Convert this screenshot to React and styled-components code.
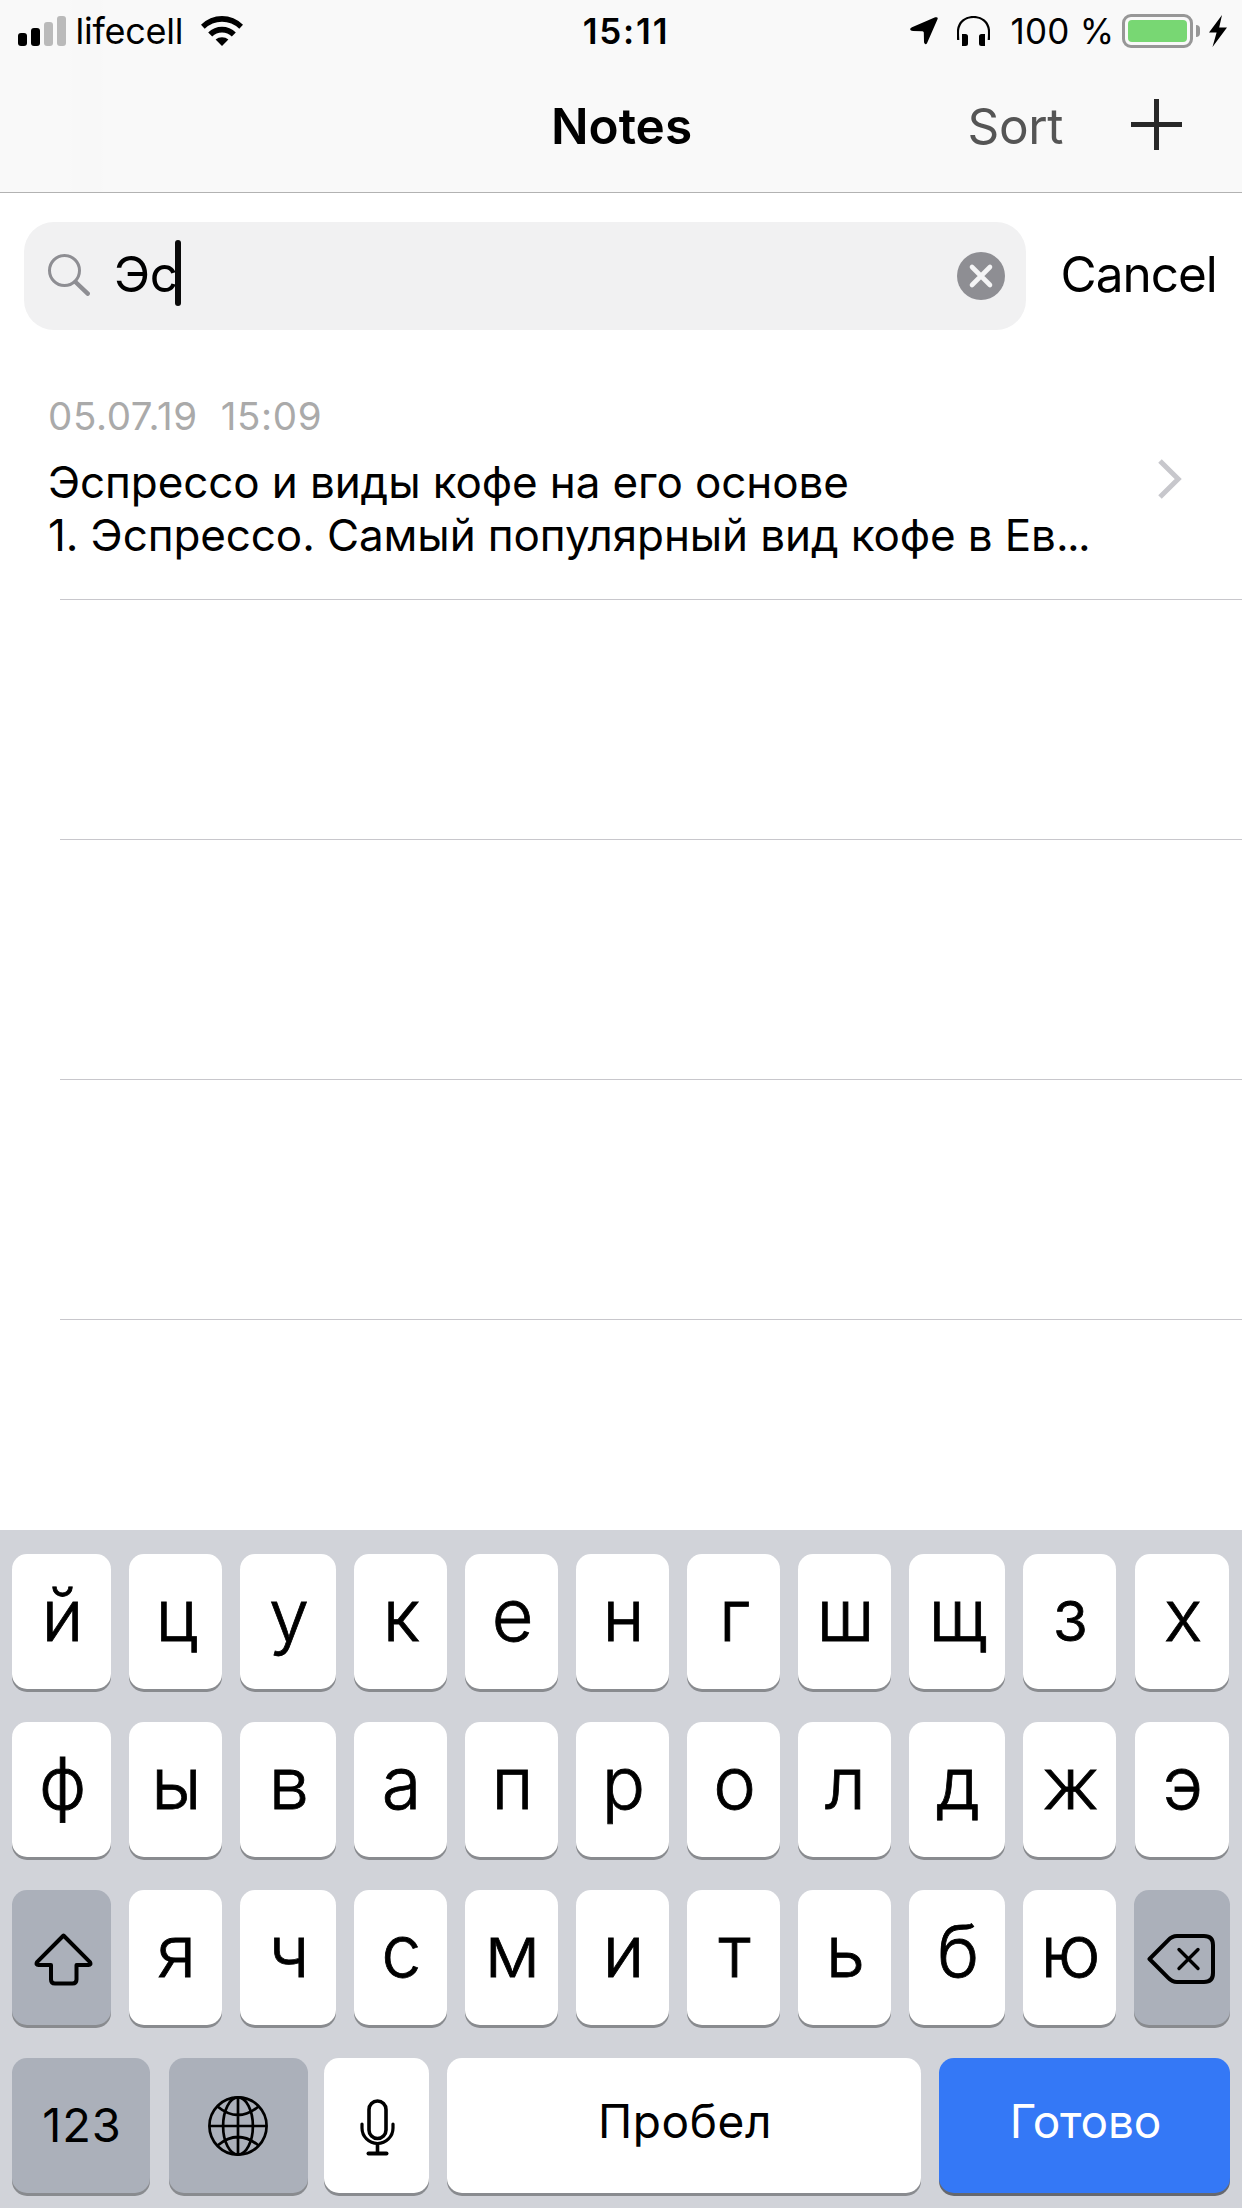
import React from 'react';
import styled, { createGlobalStyle, css } from 'styled-components';

const GlobalStyle = createGlobalStyle`
  html, body, #root { margin: 0; padding: 0; }
  body { background: #fff; }
  * { box-sizing: border-box; }
  svg { display: block; flex: none; }
`;

const Screen = styled.div`
  display: flex;
  flex-direction: column;
  width: 1242px;
  height: 2208px;
  overflow: hidden;
  background: #fff;
  color: #000;
  font-family: Inter, 'Noto Sans', sans-serif;
`;

const Header = styled.header`
  flex: none;
  height: 193px;
  border-bottom: 1px solid #b2b2b2;
  background: linear-gradient(to right, #f9f9f9 70px, #f8f8f8 72px, #f8f8f8 101px, #f9f9f9 103px);
`;

const StatusBar = styled.div`
  display: grid;
  grid-template-columns: 1fr auto 1fr;
  align-items: center;
  height: 62px;
  padding: 0 15px 0 18px;
  font-size: 35px;
  line-height: 42px;
`;

const StatusGroup = styled.div`
  display: flex;
  align-items: center;
  justify-content: ${(p) => p.$justify || 'flex-start'};
`;

const Carrier = styled.span`
  width: 135px;
  padding-left: 9.5px;
  font-size: 36px;
  letter-spacing: -0.24px;
`;

const Clock = styled.time`
  padding-left: 7px;
  font-weight: 600;
  letter-spacing: 1.8px;
`;

const HeadphonesSlot = styled.div`
  margin: 0 0 0 19px;
`;

const Percent = styled.span`
  width: 132px;
  padding-left: 20.5px;
  letter-spacing: 0.27px;
  white-space: nowrap;
`;

const Battery = styled.div`
  display: flex;
  align-items: center;
  margin-right: 9px;
`;

const BatteryShell = styled.div`
  width: 71px;
  height: 34px;
  padding: 3px;
  border: 3px solid #979797;
  border-radius: 9px;
`;

const BatteryLevel = styled.div`
  width: 100%;
  height: 100%;
  border-radius: 4px;
  background: #78d773;
`;

const BatteryNub = styled.div`
  width: 4px;
  height: 12px;
  margin-left: 3px;
  border-radius: 0 4px 4px 0;
  background: #979797;
`;

const NavBar = styled.nav`
  display: grid;
  grid-template-columns: 1fr auto 1fr;
  align-items: center;
  height: 128px;
  padding: 0 60px;
  font-size: 49.5px;
  line-height: 60px;
`;

const NavTitle = styled.h1`
  margin: 0;
  padding-left: 1px;
  grid-column: 2;
  font-size: inherit;
  font-weight: 600;
`;

const NavActions = styled.div`
  display: flex;
  align-items: center;
  justify-content: flex-end;
`;

const PlainButton = styled.button`
  margin: 0;
  padding: 0;
  border: 0;
  background: none;
  color: inherit;
  font: inherit;
`;

const SortButton = styled(PlainButton)`
  margin-right: 68px;
  color: #555;
  letter-spacing: -0.4px;
`;

const AddButton = styled(PlainButton)`
  padding-bottom: 3px;
`;

const SearchBar = styled.div`
  display: flex;
  flex: none;
  align-items: center;
  height: 166px;
  padding: 0 24px;
`;

const SearchField = styled.div`
  display: flex;
  align-items: center;
  width: 1002px;
  height: 108px;
  padding: 0 21px 0 24px;
  border-radius: 30px;
  background: #f1f1f2;
`;

const SearchIcon = styled.div`
  padding-bottom: 2px;
`;

const Query = styled.span`
  padding: 0 0 4px 24px;
  font-size: 49.5px;
  line-height: 60px;
  letter-spacing: -0.4px;
`;

const Caret = styled.span`
  width: 6px;
  height: 66px;
  margin: 0 auto 6px -3px;
  border-radius: 3px;
  background: #0a0a0a;
`;

const CancelButton = styled(PlainButton)`
  margin-left: 34.5px;
  padding-bottom: 4px;
  font-size: 49.5px;
  line-height: 60px;
  letter-spacing: -1px;
`;

const NoteList = styled.ul`
  flex: 1;
  margin: 0;
  padding: 1px 0 0 60px;
  overflow: hidden;
  list-style: none;
`;

const NoteRow = styled.li`
  display: flex;
  height: 240px;
  border-bottom: 1px solid #c8c7cc;
`;

const NoteBody = styled.div`
  flex: none;
  width: 1100px;
  margin-left: -12px;
  padding-top: 32px;
`;

const NoteDate = styled.div`
  font-size: 38.5px;
  line-height: 48px;
  letter-spacing: 0.64px;
  color: #aaa;
  white-space: pre;
`;

const NoteLine = styled.div`
  margin-top: ${(p) => p.$gap || 0}px;
  font-size: 44px;
  line-height: 53px;
  letter-spacing: -0.11px;
  white-space: nowrap;
`;

const Dots = styled.span`
  letter-spacing: -1.6px;
`;

const Disclosure = styled.div`
  display: flex;
  align-items: center;
  height: 238px;
  margin-left: 10px;
`;

const KeyboardPanel = styled.section`
  display: flex;
  flex: none;
  flex-direction: column;
  gap: 33px;
  height: 678px;
  padding: 24px 12px 0;
  background: #d1d3d9;
`;

const KeyRow = styled.div`
  display: grid;
  grid-template-columns: ${(p) => p.$columns};
  height: 135px;
`;

const tones = {
  light: css`
    background: #fff;
    color: #000;
    box-shadow: 0 3px 0 #898b8f;
  `,
  dark: css`
    background: #abb0ba;
    color: #000;
    box-shadow: 0 3px 0 #898b8f;
  `,
  primary: css`
    background: #3478f6;
    color: #fff;
    box-shadow: 0 3px 0 #66686e;
  `,
};

const Key = styled(PlainButton)`
  display: flex;
  align-items: center;
  justify-content: center;
  min-width: 0;
  height: 135px;
  border-radius: 15px;
  ${(p) => tones[p.$tone || 'light']}
`;

const IconKey = styled(Key)`
  padding: ${(p) => p.$inset || '0'};
`;

const LetterKey = styled(Key)`
  padding: 0 0 13px 2px;
  font-size: 72px;
  font-weight: 300;
  line-height: 88px;
  -webkit-text-stroke: 0.8px currentColor;
`;

const LabelKey = styled(Key)`
  padding: 0 0 ${(p) => p.$lift}px 2px;
  font-size: ${(p) => p.$size}px;
  line-height: 56px;
  letter-spacing: ${(p) => p.$tracking}px;
`;

const Signal = () => (
  <svg width="48" height="30" viewBox="0 0 48 30">
    <rect x="0" y="17" width="9" height="13" rx="3" />
    <rect x="13" y="12" width="9" height="18" rx="3" />
    <rect x="26" y="6" width="9" height="24" rx="3" fill="#bababa" />
    <rect x="39" y="0" width="9" height="30" rx="3" fill="#bababa" />
  </svg>
);

const Wifi = () => (
  <svg width="42" height="30" viewBox="0 0 42 30">
    <path d="M0 8.800A29.500 29.500 0 0 1 42 8.800L38.300 12.800A24.500 24.500 0 0 0 3.700 12.800Z" />
    <path d="M7.200 16.400A19.600 19.600 0 0 1 34.800 16.400L30.800 20.400A14 14 0 0 0 11.200 20.400Z" />
    <path d="M14.600 23.600A9.600 9.600 0 0 1 27.400 23.600L21 30Z" />
  </svg>
);

const LocationArrow = () => (
  <svg width="28" height="28" viewBox="0 0 28 28">
    <path d="M25.2.3Q28.6-.4 27.4 2.6L17 26.2Q15.9 28 14.6 26.6Q14 26 14 24.8L13.8 15.6Q13.7 14.4 12.5 14.3L3 13.9Q.3 13.9.1 12.3Q0 11 2 10.2Z" />
  </svg>
);

const Headphones = () => (
  <svg width="33" height="30" viewBox="0 0 33 30">
    <path d="M1.200 24C.8 18 1 15.500 1 14.500C2 5.500 8.500 1 16.500 1S31 5.500 32 14.500C32 15.500 32.200 18 31.800 24" fill="none" stroke="#000" strokeWidth="2.200" />
    <path d="M5 18H8.500Q11 18 11 20.500V27.500Q11 30 8.500 30H5ZM28 18H24.500Q22 18 22 20.500V27.500Q22 30 24.500 30H28Z" />
  </svg>
);

const Bolt = () => (
  <svg width="18" height="32" viewBox="0 0 18 32">
    <path d="M13 0L0 17.500H7.600L3.500 32L18 12.500H10.200Z" />
  </svg>
);

const Plus = () => (
  <svg width="51" height="51" viewBox="0 0 51 51">
    <path d="M25.500 0V51M0 25.500H51" stroke="#282828" strokeWidth="5" />
  </svg>
);

const Magnifier = () => (
  <svg width="42" height="42" viewBox="0 0 42 42" fill="none" stroke="#8e8e93">
    <circle cx="16.500" cy="16.500" r="15" strokeWidth="3" />
    <path d="M27.500 28L39.700 39.700" strokeWidth="4.400" strokeLinecap="round" />
  </svg>
);

const ClearIcon = () => (
  <svg width="48" height="48" viewBox="0 0 48 48">
    <circle cx="24" cy="24" r="24" fill="#8e8e93" />
    <path d="M15 15L33 33M33 15L15 33" stroke="#f4f4f5" strokeWidth="4.600" strokeLinecap="round" />
  </svg>
);

const Chevron = () => (
  <svg width="24" height="40" viewBox="0 0 24 40">
    <path d="M2 2L20.200 20L2 38" fill="none" stroke="#c7c7cc" strokeWidth="5" />
  </svg>
);

const ShiftIcon = () => (
  <svg width="59" height="53" viewBox="0 0 59 53" fill="none" stroke="#000" strokeWidth="4" strokeLinejoin="round">
    <path d="M29.500 2.500L56 29.200Q57.400 32 54.500 32H42.500V46.500Q42.500 50.500 38.500 50.500H21Q17 50.500 17 46.500V32H4.500Q1.600 32 3 29.200Z" />
  </svg>
);

const DeleteIcon = () => (
  <svg width="68" height="50" viewBox="0 0 68 50" fill="none" stroke="#000" strokeWidth="4" strokeLinejoin="round" strokeLinecap="round">
    <path d="M2.500 25L21 6.300Q25 2 30 2H57Q66 2 66 11V39Q66 48 57 48H30Q25 48 21 43.700Z" />
    <path d="M32 15.500L51 34.500M51 15.500L32 34.500" strokeWidth="3.400" />
  </svg>
);

const GlobeIcon = () => (
  <svg width="60" height="60" viewBox="0 0 60 60" fill="none" stroke="#000" strokeWidth="2.700">
    <circle cx="30" cy="30" r="28.600" />
    <ellipse cx="30" cy="30" rx="14.900" ry="28.600" />
    <path d="M30 1V59M1 30H59M9.500 10.500Q30 27.500 50.500 10.500M9.500 49.500Q30 32.500 50.500 49.500" />
  </svg>
);

const MicIcon = () => (
  <svg width="35" height="57" viewBox="0 0 35 57" fill="none" stroke="#000" strokeLinecap="round">
    <rect x="9" y="2" width="17" height="37.500" rx="8.500" strokeWidth="3.600" />
    <path d="M2 25V29A15.500 15.500 0 0 0 33 29V25" strokeWidth="3.200" />
    <path d="M17.500 45V54" strokeWidth="3.600" strokeLinecap="butt" />
    <path d="M8.500 54.500H26.500" strokeWidth="4" />
  </svg>
);

const LETTER_COLUMNS = '99px 93px 96px 93px 93px 93px 93px 93px 96px 93px 94px';
const EDIT_COLUMNS = '99px 93px 96px 93px 93px 93px 93px 93px 96px 93px 96px';

const LetterRow = styled(KeyRow)`
  column-gap: 18px;

  & > :last-child {
    margin-left: ${(p) => p.$lastShift}px;
    margin-right: -${(p) => p.$lastShift}px;
  }
`;

const Letters = ({ text }) => [...text].map((c) => <LetterKey key={c}>{c}</LetterKey>);

const Keyboard = () => (
  <KeyboardPanel>
    <LetterRow $columns={LETTER_COLUMNS} $lastShift={1}>
      <Letters text="йцукенгшщзх" />
    </LetterRow>
    <LetterRow $columns={LETTER_COLUMNS} $lastShift={1}>
      <Letters text="фывапролджэ" />
    </LetterRow>
    <LetterRow $columns={EDIT_COLUMNS} $lastShift={0}>
      <IconKey $tone="dark" $inset="3px 0 0 3px" aria-label="Shift"><ShiftIcon /></IconKey>
      <Letters text="ячсмитьбю" />
      <IconKey $tone="dark" $inset="2px 2px 0 0" aria-label="Delete"><DeleteIcon /></IconKey>
    </LetterRow>
    <KeyRow $columns="138px 19px 139px 16px 105px 18px 474px 18px 291px">
      <LabelKey $tone="dark" $size={47} $tracking={0.9} $lift={1}>123</LabelKey>
      <span />
      <IconKey $tone="dark" $inset="1px 1px 0 0" aria-label="Language"><GlobeIcon /></IconKey>
      <span />
      <IconKey $inset="3px 0 0 2px" aria-label="Dictate"><MicIcon /></IconKey>
      <span />
      <LabelKey $size={46} $tracking={0.6} $lift={9}>Пробел</LabelKey>
      <span />
      <LabelKey $tone="primary" $size={46} $tracking={-0.16} $lift={9}>Готово</LabelKey>
    </KeyRow>
  </KeyboardPanel>
);

export default function App() {
  return (
    <Screen>
      <GlobalStyle />
      <Header>
        <StatusBar>
          <StatusGroup>
            <Signal />
            <Carrier>lifecell</Carrier>
            <Wifi />
          </StatusGroup>
          <Clock>15:11</Clock>
          <StatusGroup $justify="flex-end">
            <LocationArrow />
            <HeadphonesSlot>
              <Headphones />
            </HeadphonesSlot>
            <Percent>100 %</Percent>
            <Battery>
              <BatteryShell><BatteryLevel /></BatteryShell>
              <BatteryNub />
            </Battery>
            <Bolt />
          </StatusGroup>
        </StatusBar>
        <NavBar>
          <NavTitle>Notes</NavTitle>
          <NavActions>
            <SortButton>Sort</SortButton>
            <AddButton aria-label="Add"><Plus /></AddButton>
          </NavActions>
        </NavBar>
      </Header>
      <SearchBar>
        <SearchField>
          <SearchIcon><Magnifier /></SearchIcon>
          <Query>Эс</Query>
          <Caret />
          <ClearIcon />
        </SearchField>
        <CancelButton>Cancel</CancelButton>
      </SearchBar>
      <NoteList>
        <NoteRow>
          <NoteBody>
            <NoteDate>{'05.07.19  15:09'}</NoteDate>
            <NoteLine $gap={16}>Эспрессо и виды кофе на его основе</NoteLine>
            <NoteLine>1. Эспрессо. Самый популярный вид кофе в Ев<Dots>...</Dots></NoteLine>
          </NoteBody>
          <Disclosure><Chevron /></Disclosure>
        </NoteRow>
        <NoteRow />
        <NoteRow />
        <NoteRow />
      </NoteList>
      <Keyboard />
    </Screen>
  );
}
